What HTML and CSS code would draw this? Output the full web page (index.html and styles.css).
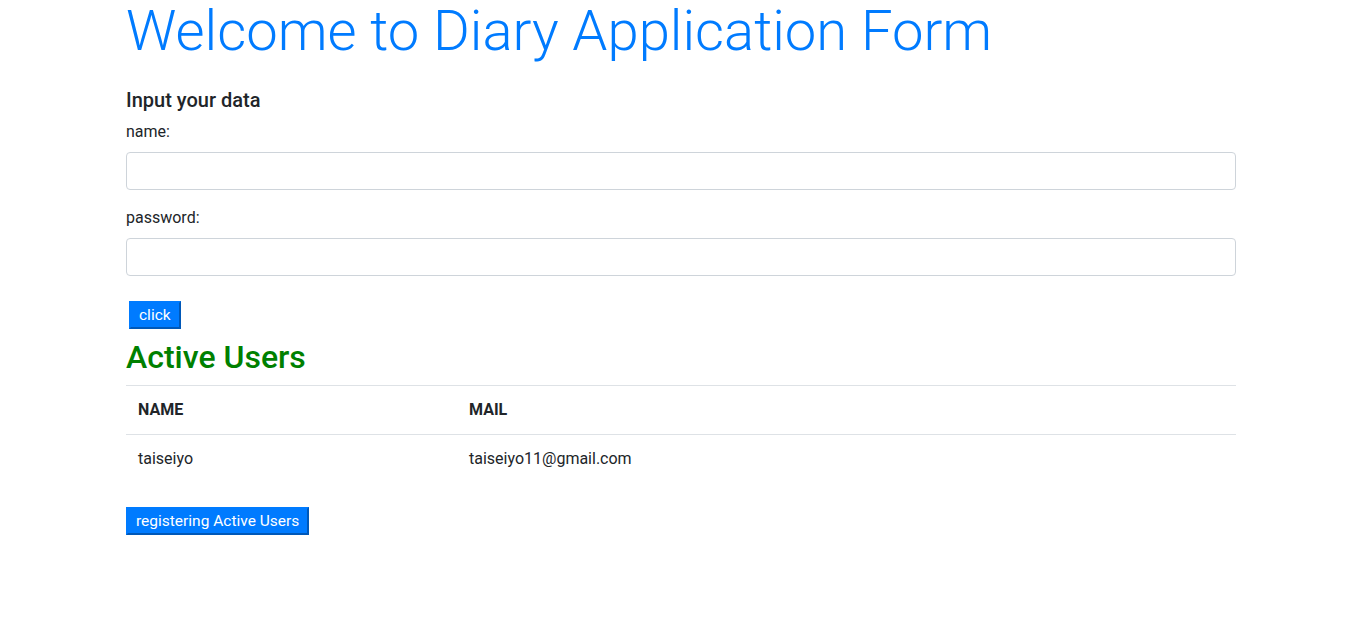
FILE: index.html
```html
<!DOCTYPE html>
<html lang="en">
<head>
<meta charset="utf-8">
<title>Diary Application Form</title>
<link rel="stylesheet" href="styles.css">
</head>
<body>
<div class="container">
  <h1 class="title">Welcome to Diary Application Form</h1>
  <h5 class="subtitle">Input your data</h5>
  <form class="form">
    <div class="form-group">
      <label class="label">name:</label>
      <input class="input" type="text">
    </div>
    <div class="form-group">
      <label class="label">password:</label>
      <input class="input" type="password">
    </div>
    <div class="btn-row">
      <button type="button" class="btn btn-click">click</button>
    </div>
  </form>
  <h2 class="section-title">Active Users</h2>
  <table class="table">
    <thead>
      <tr><th class="col-name">NAME</th><th>MAIL</th></tr>
    </thead>
    <tbody>
      <tr><td>taiseiyo</td><td>taiseiyo11@gmail.com</td></tr>
    </tbody>
  </table>
  <button type="button" class="btn">registering Active Users</button>
</div>
</body>
</html>
```
FILE: styles.css
```css
* { box-sizing: border-box; }
html, body { margin: 0; padding: 0; }
body {
  font-family: Roboto, "Liberation Sans", sans-serif;
  font-size: 16px;
  line-height: 1.5;
  color: #212529;
  background: #fff;
}
.container {
  width: 1110px;
  margin-left: 126px;
}
.title {
  margin: -2px 0 0 0;
  font-size: 56.2px;
  font-weight: 300;
  line-height: 67.2px;
  color: #007bff;
}
.subtitle {
  margin: 23px 0 8px 0;
  font-size: 20px;
  font-weight: 500;
  line-height: 1.2;
}
.form-group { margin-bottom: 16px; }
.label {
  display: block;
  margin-bottom: 8px;
}
.input {
  display: block;
  width: 100%;
  height: 38px;
  padding: 6px 12px;
  font: inherit;
  color: #495057;
  border: 1px solid #ced4da;
  border-radius: 4px;
  background: #fff;
}
.btn-row { padding: 9px 0 0 3px; }
.btn {
  display: inline-block;
  font-family: Roboto, "Liberation Sans", sans-serif;
  font-size: 15.5px;
  line-height: 24px;
  padding: 0 8px;
  color: #fff;
  background: #007bff;
  border: 2px solid;
  border-color: #007bff #0058b8 #0058b8 #007bff;
  border-radius: 0;
  margin: 0;
  cursor: pointer;
}
.section-title {
  margin: 9px 0 8px 0;
  font-size: 32px;
  font-weight: 500;
  line-height: 1.2;
  color: #008000;
}
.table {
  width: 100%;
  border-collapse: collapse;
  margin-bottom: 24px;
}
.table th, .table td {
  padding: 12px;
  text-align: left;
  vertical-align: top;
  line-height: 24px;
}
.table th {
  font-weight: 700;
  border-top: 1px solid #dee2e6;
  border-bottom: 1px solid #dee2e6;
}
.col-name { width: 331px; }
```
